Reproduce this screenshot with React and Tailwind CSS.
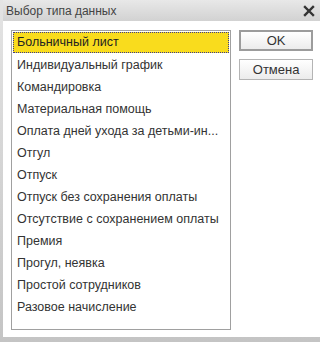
import React from 'react';

const items = [
  'Больничный лист',
  'Индивидуальный график',
  'Командировка',
  'Материальная помощь',
  'Оплата дней ухода за детьми-ин...',
  'Отгул',
  'Отпуск',
  'Отпуск без сохранения оплаты',
  'Отсутствие с сохранением оплаты',
  'Премия',
  'Прогул, неявка',
  'Простой сотрудников',
  'Разовое начисление',
];

export default function App() {
  return (
    <div
      className="w-[320px] h-[342px] overflow-hidden bg-gradient-to-b from-[#e4e4e4] to-[#c4c4c4] pl-[3px] flex flex-col"
      style={{ fontFamily: '"Liberation Sans", Arial, sans-serif' }}
    >
      {/* Title bar */}
      <div className="h-[21px] shrink-0 flex items-center justify-between pl-[3px] pr-[5px] bg-gradient-to-b from-[#e8e8e8] to-[#d2d2d2]">
        <span className="text-[12px] text-[#444]">Выбор типа данных</span>
        <svg width="12" height="12" viewBox="0 0 12 12">
          <path d="M2 2 L10 10 M10 2 L2 10" stroke="#333" strokeWidth="2.4" strokeLinecap="square" />
        </svg>
      </div>

      {/* Body */}
      <div className="h-[316px] shrink-0 bg-white flex gap-[8px] pl-[8px] pt-[9px] pr-[7px]">
        <div className="w-[221px] h-[300px] border border-[#a0a0a0] p-[1px]">
          {items.map((t, i) => (
            <div
              key={t}
              className={
                i === 0
                  ? 'h-[21px] mb-[1px] flex items-center pl-[3px] pr-[2px] bg-[#f9dc1d] border border-dotted border-[#3c3c8c] text-[12.5px] text-[#222]'
                  : 'h-[22px] flex items-center pl-[4px] pr-[3px] text-[12.5px] text-[#333]'
              }
            >
              <span className="whitespace-nowrap">{t}</span>
            </div>
          ))}
        </div>

        <div className="flex flex-col gap-[8px] w-[74px]">
          <button className="h-[21px] border-2 border-[#9c9c9c] bg-gradient-to-b from-white to-[#ececec] text-[13px] text-[#333] leading-none">
            OK
          </button>
          <button className="h-[21px] border border-[#b4b4b4] bg-gradient-to-b from-white to-[#ececec] text-[13px] text-[#333] leading-none">
            Отмена
          </button>
        </div>
      </div>
    </div>
  );
}
